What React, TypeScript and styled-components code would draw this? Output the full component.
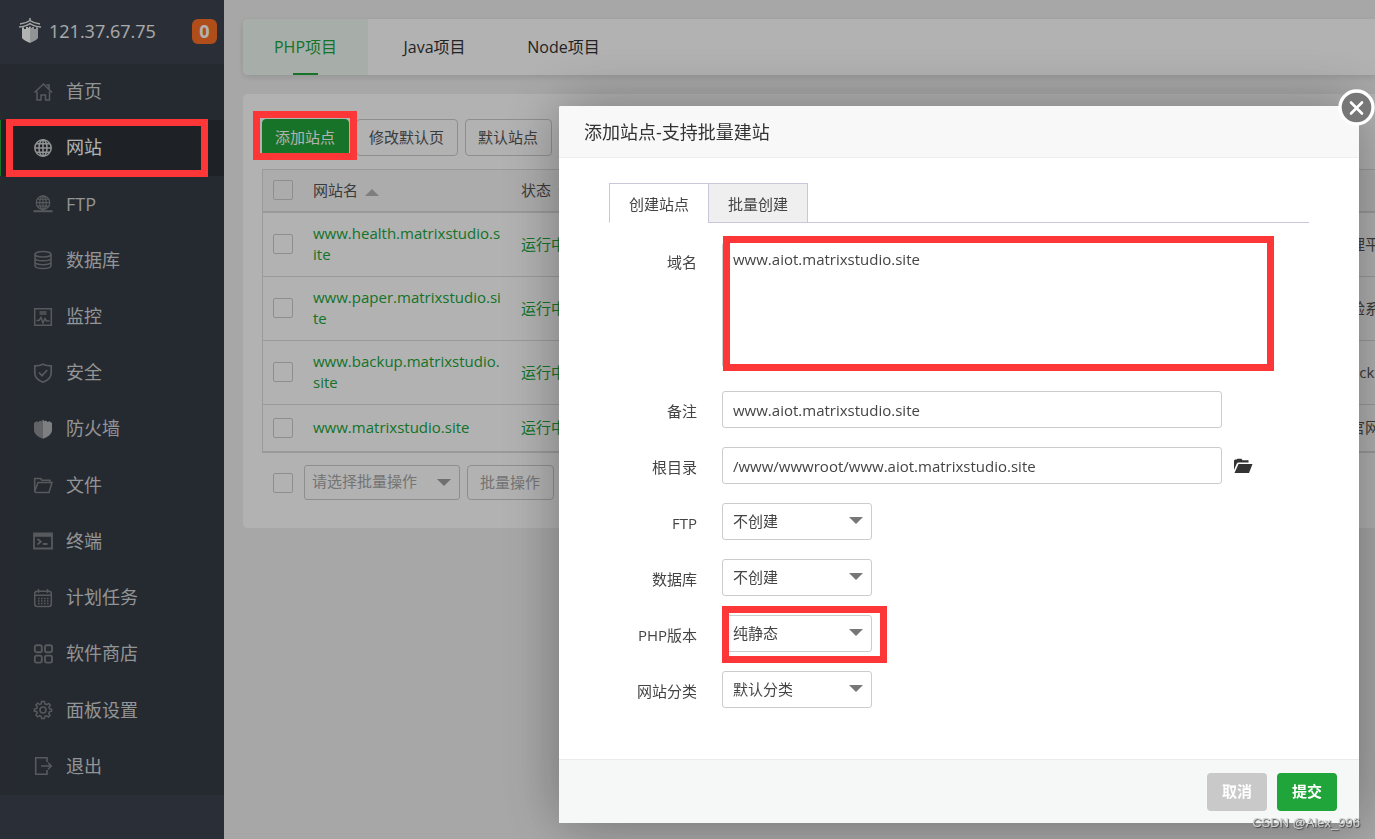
import React from "react";
import styled, { createGlobalStyle, css } from "styled-components";

const GlobalStyle = createGlobalStyle`
  *, *::before, *::after { box-sizing: border-box; }
  html, body { margin: 0; height: 100%; }
  body {
    background: #f0f0f0;
    color: #555;
    font: 15px/21px "Open Sans", "Noto Sans CJK SC", sans-serif;
    overflow: hidden;
  }
  button, input, select, textarea { font: inherit; color: inherit; margin: 0; }
  a { text-decoration: none; }
`;

const green = "#20a53a";

/* ---------- page shell ---------- */

const Shell = styled.div`
  display: flex;
  min-height: 100vh;
`;

const Sidebar = styled.aside`
  flex: 0 0 224px;
  background: #3d444f;
`;

const ServerBar = styled.div`
  display: flex;
  align-items: center;
  height: 64px;
  padding: 0 7px 2px 19px;
  color: #f2f4f5;
  font-size: 18px;
  svg { margin-right: 8px; }
`;

const MessageBadge = styled.span`
  margin-left: auto;
  width: 25px;
  height: 25px;
  border-radius: 6px;
  background: #fc7028;
  color: #fff;
  font-weight: 700;
  line-height: 25px;
  text-align: center;
`;

const Nav = styled.nav`
  display: grid;
  grid-auto-rows: 1fr;
  min-height: 731px;
  background: #363c45;
`;

const NavLink = styled.a<{ $active?: boolean }>`
  display: flex;
  align-items: center;
  gap: 13px;
  padding: 0 0 1px 32px;
  border-left: 1px solid ${(p) => (p.$active ? green : "#3a3d42")};
  background: ${(p) => (p.$active ? "#2b3036" : "transparent")};
  color: ${(p) => (p.$active ? "#fff" : "#d2d4d6")};
  font-size: 18px;
  svg { color: ${(p) => (p.$active ? "#cfd1d3" : "#7d8185")}; }
`;

const Main = styled.main`
  flex: 1;
  min-width: 0;
  padding: 19px 0 0 19px;
`;

const ProjectTabs = styled.div`
  display: flex;
  gap: 4px;
  height: 56px;
  margin-bottom: 19px;
  background: #fff;
  border-radius: 5px 0 0 5px;
  box-shadow: 0 2px 6px rgba(0, 0, 0, 0.12);
  overflow: hidden;
`;

const ProjectTab = styled.button<{ $active?: boolean }>`
  position: relative;
  min-width: 125px;
  padding: 0 12px;
  border: 0;
  background: ${(p) => (p.$active ? "#f0faf3" : "transparent")};
  color: ${(p) => (p.$active ? green : "#333")};
  font-size: 16px;
  ${(p) =>
    p.$active &&
    css`
      &::after {
        content: "";
        position: absolute;
        left: 50px;
        right: 50px;
        bottom: 0;
        height: 2px;
        background: ${green};
      }
    `}
`;

const Panel = styled.section`
  padding: 25px 0 28px 19px;
  background: #fff;
  border-radius: 5px 0 0 5px;
`;

const Toolbar = styled.div`
  display: flex;
  gap: 7px;
  margin-bottom: 13px;
`;

const ToolButton = styled.button<{ $primary?: boolean; $muted?: boolean }>`
  height: ${(p) => (p.$muted ? "35px" : "37px")};
  padding: 0 13px 0 12px;
  border: 1px solid ${(p) => (p.$primary ? green : "#ccc")};
  border-radius: 4px;
  background: ${(p) => (p.$primary ? green : "#fff")};
  color: ${(p) => (p.$primary ? "#fff" : p.$muted ? "#a6a6a6" : "#555")};
  white-space: nowrap;
`;

/* ---------- site table ---------- */

const Table = styled.table`
  width: 100%;
  table-layout: fixed;
  border-collapse: separate;
  border-spacing: 0;
  border: solid #ddd;
  border-width: 1px 0 1px 1px;
`;

const Head = styled.th`
  height: 43px;
  padding: 0 10px 1px;
  border-bottom: 2px solid #ddd;
  background: #f7f7f7;
  font-weight: 400;
  text-align: left;
  white-space: nowrap;
  overflow: hidden;
  svg { margin-left: 7px; color: #b5b5b5; }
`;

const Cell = styled.td<{ $nowrap?: boolean }>`
  height: 47px;
  padding: 10px 10px 11px;
  border-bottom: 1px solid #ddd;
  word-break: break-all;
  overflow: hidden;
  white-space: ${(p) => (p.$nowrap ? "nowrap" : "normal")};
`;

const GreenLink = styled.a`
  color: ${green};
`;

const Check = styled.input`
  display: block;
  appearance: none;
  flex: none;
  width: 20px;
  height: 20px;
  border: 1px solid #ccc;
  border-radius: 2px;
  background: transparent;
`;

const BatchRow = styled.div`
  display: flex;
  align-items: center;
  padding: 12px 0 0 11px;
  gap: 7px;
  ${Check} { margin-right: 4px; }
`;

/* ---------- select ---------- */

const SelectBox = styled.span<{ $width: number; $muted?: boolean }>`
  position: relative;
  display: block;
  width: ${(p) => p.$width}px;
  height: ${(p) => (p.$muted ? 35 : 37)}px;
  color: ${(p) => (p.$muted ? "#a6a6a6" : "#444")};
  select {
    appearance: none;
    width: 100%;
    height: 100%;
    padding: 0 30px ${(p) => (p.$muted ? "2px 7px" : "0 10px")};
    border: 1px solid #ccc;
    border-radius: 3px;
    background: #fff;
  }
  svg {
    position: absolute;
    top: 14px;
    right: 9px;
    color: ${(p) => (p.$muted ? "#a0a0a0" : "#777")};
    pointer-events: none;
  }
`;

/* ---------- dialog ---------- */

const Mask = styled.div`
  position: fixed;
  inset: 0;
  background: rgba(0, 0, 0, 0.3);
`;

const Dialog = styled.section`
  position: fixed;
  top: 106px;
  right: 16px;
  width: 800px;
  background: #fff;
  border-radius: 2px;
  box-shadow: 1px 1px 60px rgba(0, 0, 0, 0.35);
  color: #444;
`;

const DialogTitle = styled.h2`
  margin: 0;
  padding: 0 25px;
  height: 52px;
  border-bottom: 1px solid #eee;
  border-radius: 2px 2px 0 0;
  background: #f8f8f8;
  color: #333;
  font-size: 18px;
  font-weight: 400;
  line-height: 52px;
`;

const CloseButton = styled.button`
  position: absolute;
  top: -17px;
  right: -16px;
  display: flex;
  padding: 0;
  border: 0;
  background: none;
`;

const DialogBody = styled.div`
  padding: 25px 50px 51px;
`;

const FormTabs = styled.div`
  display: flex;
  height: 40px;
  margin-bottom: 19px;
  border-bottom: 1px solid #c9c8da;
`;

const FormTab = styled.button<{ $active?: boolean }>`
  height: 40px;
  padding: 2px 19px 0;
  border: 1px solid #c9c8da;
  background: #efefef;
  ${(p) =>
    p.$active &&
    css`
      border-right: 0;
      border-bottom-color: #fff;
      background: #fff;
    `}
`;

const Form = styled.form`
  display: grid;
  gap: 19px;
`;

const Row = styled.div`
  display: flex;
  align-items: flex-start;
`;

const Label = styled.label`
  flex: 0 0 88px;
  height: 37px;
  margin-right: 25px;
  line-height: 40px;
  text-align: right;
`;

const TextInput = styled.input`
  width: 500px;
  height: 37px;
  padding: 0 10px;
  border: 1px solid #ccc;
  border-radius: 3px;
  background: #fff;
`;

const DomainArea = styled.textarea`
  display: block;
  width: 550px;
  height: 126px;
  margin-bottom: 4px;
  padding: 6px 10px;
  border: 1px solid #ccc;
  border-radius: 3px;
  resize: none;
  background: #fff;
`;

const FolderButton = styled.button`
  display: flex;
  align-self: center;
  margin-left: 11px;
  padding: 0;
  border: 0;
  background: none;
  color: #333;
`;

const DialogFooter = styled.footer`
  display: flex;
  justify-content: flex-end;
  gap: 10px;
  padding: 13px 22px 12px;
  border-top: 1px solid #e8eced;
  background: #f6f8f8;
`;

const FooterButton = styled.button<{ $primary?: boolean }>`
  width: 60px;
  height: 38px;
  padding: 0 0 2px;
  border: 0;
  border-radius: 4px;
  background: ${(p) => (p.$primary ? green : "#c9c9c9")};
  color: #fff;
  font-weight: 700;
`;

/* red marker frames drawn over the interface */
const Marker = styled.div<{ $x: number; $y: number; $w: number; $h: number }>`
  position: absolute;
  left: ${(p) => p.$x}px;
  top: ${(p) => p.$y}px;
  width: ${(p) => p.$w}px;
  height: ${(p) => p.$h}px;
  border: 7px solid #fd3737;
  pointer-events: none;
`;

const Watermark = styled.div`
  position: fixed;
  right: 15px;
  bottom: 8px;
  color: #d2d2d2;
  font: 13px/16px "Liberation Sans", sans-serif;
  text-shadow: 1px 1px 1px #444;
`;

/* ---------- icons ---------- */

const Triangle = ({ up, size = 14 }: { up?: boolean; size?: number }) => (
  <svg width={size} height={size / 2} viewBox="0 0 14 7" fill="currentColor">
    <path d={up ? "M0 7L7 0L14 7Z" : "M0 0H14L7 7Z"} />
  </svg>
);

const globe = (
  <>
    <circle cx="10" cy="10" r="8.2" />
    <ellipse cx="10" cy="10" rx="4" ry="8.2" />
    <path d="M10 1.8V18.2M1.8 10H18.2M3 5.8H17M3 14.2H17" />
  </>
);

const icons: Record<string, React.ReactNode> = {
  home: <path d="M1.5 10.5L10.5 2L19 10.5M4 9.5V18H8V13H12.5V18H16.5V9.5M13.5 3H16V7" />,
  globe,
  ftp: (
    <>
      <g transform="translate(1.8 .5) scale(.82)">{globe}</g>
      <path d="M10 15V17M.5 17.2H19.5" strokeWidth="2" />
    </>
  ),
  database: (
    <>
      <ellipse cx="10" cy="4.2" rx="8" ry="2.8" />
      <path d="M2 4.2V15.5C2 19.6 18 19.6 18 15.5V4.2M2 8C2 11.8 18 11.8 18 8M2 11.8C2 15.6 18 15.6 18 11.8" />
    </>
  ),
  monitor: (
    <>
      <path d="M1.7 1.7H18.3V18.3H1.7Z" />
      <path d="M6.5 5H13.5M6.5 7H13.5M3.5 13.5H6L8 10.5L10 16L12 11.5L13.5 14H16.5" />
    </>
  ),
  shield: <path d="M10 1.2C7.5 2.5 5 2.8 1.8 2.8V10C1.8 14.5 5.5 17.5 10 19.2C14.5 17.5 18.2 14.5 18.2 10V2.8C15 2.8 12.5 2.5 10 1.2ZM6 9.5L9 12.7L14.2 7" strokeWidth="1.7" />,
  wall: (
    <g stroke="none">
      <path d="M10 .5L8.5 2.3L7 1.5L5.5 3L3.5 2.3L1 4V11C1 15 5 18 10 19.8Z" fill="#8b8e92" />
      <path d="M10 .5L11.5 2.3L13 1.5L14.5 3L16.5 2.3L19 4V11C19 15 15 18 10 19.8Z" fill="#b4b6b8" />
    </g>
  ),
  folder: <path d="M1.7 16.5V3.5H7.5L9 5.3H17V7.5M1.7 16.5L5 7.5H19L16 17.5H3Q1.7 17.5 1.7 16.5Z" />,
  terminal: (
    <>
      <path d="M1 2.5H19V17.5H1Z" strokeWidth="1.8" />
      <path d="M1 4H19" strokeWidth="3.6" />
      <path d="M4.5 8L7.8 10.8L4.5 13.5M9.8 13H14.5" strokeWidth="1.8" />
    </>
  ),
  calendar: (
    <>
      <rect x="1.7" y="3.2" width="16.6" height="15.2" rx="2.5" />
      <path d="M2 7.3H18M5.5 1V5M14.5 1V5" />
      <path d="M5 10.5H15.5M5 13H15.5M5 15.5H15.5" strokeDasharray="1.6 1.4" />
    </>
  ),
  grid: (
    <g strokeWidth="1.9">
      <rect x="1.8" y="1.2" width="7" height="7" rx="1.8" />
      <rect x="12" y="1.2" width="7" height="7" rx="1.8" />
      <rect x="1.8" y="11.6" width="7" height="7" rx="1.8" />
      <rect x="12" y="11.6" width="7" height="7" rx="1.8" />
    </g>
  ),
  gear: (
    <>
      <circle cx="10" cy="10" r="3" />
      <path d="M8.6 1.5H11.4L12 4L13.6 4.7L15.8 3.4L17.3 5L16 7.2L16.5 8.6L18.6 9.2V11.2L16.4 11.8L15.8 13.4L17 15.4L15.4 17L13.2 15.8L11.9 16.3L11.3 18.5H8.7L8.1 16.3L6.6 15.7L4.6 16.9L3 15.2L4.2 13.2L3.7 11.7L1.4 11.1V9L3.7 8.4L4.3 6.8L3 4.8L4.8 3.2L6.7 4.5L8.1 4Z" />
    </>
  ),
  exit: <path d="M14 6V1.8H2.7V18.2H14V14M8 10H18.5M15 6.8L18.3 10L15 13.2" strokeWidth="1.6" />,
};

const NavIcon = ({ name }: { name: string }) => (
  <svg width="20" height="20" viewBox="0 0 20 20" fill="none" stroke="currentColor" strokeWidth="1.5">
    {icons[name]}
  </svg>
);

const Logo = () => (
  <svg width="22" height="26" viewBox="0 0 22 26">
    <path d="M11 0V3M1 6Q7 5.5 11 2.5Q15 5.5 21 6M0 9Q7 8.5 11 5.5Q15 8.5 22 9" fill="none" stroke="#eee" strokeWidth="1.5" />
    <path d="M3 9.5L5 9.2V11H7V9H9V10.5L11 8V25Q4 22 3 20Z" fill="#fff" />
    <path d="M19 9.5L17 9.2V11H15V9H13V10.5L11 8V25Q18 22 19 20Z" fill="#d2d3d4" />
  </svg>
);

/* ---------- data ---------- */

const navItems = [
  ["home", "首页"],
  ["globe", "网站"],
  ["ftp", "FTP"],
  ["database", "数据库"],
  ["monitor", "监控"],
  ["shield", "安全"],
  ["wall", "防火墙"],
  ["folder", "文件"],
  ["terminal", "终端"],
  ["calendar", "计划任务"],
  ["grid", "软件商店"],
  ["gear", "面板设置"],
  ["exit", "退出"],
];

const sites = [
  ["www.health.matrixstudio.site", "健康管理平台"],
  ["www.paper.matrixstudio.site", "论文检验系统"],
  ["www.backup.matrixstudio.site", "Data backup"],
  ["www.matrixstudio.site", "Matrix官网"],
];

const selects = [
  ["ftp", "FTP", "不创建"],
  ["database", "数据库", "不创建"],
  ["php", "PHP版本", "纯静态"],
  ["category", "网站分类", "默认分类"],
];

export default function App() {
  return (
    <>
      <GlobalStyle />
      <Shell>
        <Sidebar>
          <ServerBar>
            <Logo />
            121.37.67.75
            <MessageBadge>0</MessageBadge>
          </ServerBar>
          <Nav>
            {navItems.map(([icon, text]) => (
              <NavLink key={icon} href="#" $active={icon === "globe"}>
                <NavIcon name={icon} />
                {text}
              </NavLink>
            ))}
          </Nav>
        </Sidebar>

        <Main>
          <ProjectTabs>
            <ProjectTab $active>PHP项目</ProjectTab>
            <ProjectTab>Java项目</ProjectTab>
            <ProjectTab>Node项目</ProjectTab>
          </ProjectTabs>

          <Panel>
            <Toolbar>
              <ToolButton $primary>添加站点</ToolButton>
              <ToolButton>修改默认页</ToolButton>
              <ToolButton>默认站点</ToolButton>
            </Toolbar>

            <Table>
              <colgroup>
                <col style={{ width: 40 }} />
                <col style={{ width: 208 }} />
                <col style={{ width: 100 }} />
                <col />
                <col style={{ width: 80 }} />
              </colgroup>
              <thead>
                <tr>
                  <Head><Check type="checkbox" aria-label="all" /></Head>
                  <Head>网站名<Triangle up /></Head>
                  <Head>状态<Triangle /></Head>
                  <Head />
                  <Head />
                </tr>
              </thead>
              <tbody>
                {sites.map(([domain, note]) => (
                  <tr key={domain}>
                    <Cell><Check type="checkbox" aria-label={domain} /></Cell>
                    <Cell><GreenLink href="#">{domain}</GreenLink></Cell>
                    <Cell><GreenLink href="#">运行中</GreenLink></Cell>
                    <Cell />
                    <Cell $nowrap>{note}</Cell>
                  </tr>
                ))}
              </tbody>
            </Table>

            <BatchRow>
              <Check type="checkbox" aria-label="batch" />
              <SelectBox $width={156} $muted>
                <select aria-label="batch action">
                  <option>请选择批量操作</option>
                </select>
                <Triangle />
              </SelectBox>
              <ToolButton $muted>批量操作</ToolButton>
            </BatchRow>
          </Panel>
        </Main>
      </Shell>

      <Mask />

      <Dialog role="dialog" aria-labelledby="dialog-title">
        <DialogTitle id="dialog-title">添加站点-支持批量建站</DialogTitle>
        <DialogBody>
          <FormTabs>
            <FormTab $active>创建站点</FormTab>
            <FormTab>批量创建</FormTab>
          </FormTabs>
          <Form>
            <Row>
              <Label htmlFor="domain">域名</Label>
              <DomainArea id="domain" spellCheck={false} defaultValue="www.aiot.matrixstudio.site" />
            </Row>
            <Row>
              <Label htmlFor="note">备注</Label>
              <TextInput id="note" defaultValue="www.aiot.matrixstudio.site" />
            </Row>
            <Row>
              <Label htmlFor="root">根目录</Label>
              <TextInput id="root" defaultValue="/www/wwwroot/www.aiot.matrixstudio.site" />
              <FolderButton type="button" aria-label="folder">
                <svg width="20" height="16" viewBox="0 0 20 16" fill="currentColor">
                  <path d="M1 12V2.5L2 1.5H3.5L4.5 .8H8.5L9.5 2.2H15.5V4.5H5L3.8 5.5Z" />
                  <path d="M5.5 6H19.5L16 15H1.5Z" />
                </svg>
              </FolderButton>
            </Row>
            {selects.map(([id, label, value]) => (
              <Row key={id}>
                <Label htmlFor={id}>{label}</Label>
                <SelectBox $width={150}>
                  <select id={id}>
                    <option>{value}</option>
                  </select>
                  <Triangle />
                </SelectBox>
              </Row>
            ))}
          </Form>
        </DialogBody>
        <DialogFooter>
          <FooterButton>取消</FooterButton>
          <FooterButton $primary>提交</FooterButton>
        </DialogFooter>
        <Marker $x={164} $y={130} $w={551} $h={135} />
        <Marker $x={163} $y={500} $w={165} $h={57} />
        <CloseButton aria-label="close">
          <svg width="37" height="37" viewBox="0 0 37 37">
            <circle cx="18.5" cy="18.5" r="16.5" fill="#777" stroke="#fff" strokeWidth="3.4" />
            <path d="M13 13.5L24 24.5M24 13.5L13 24.5" stroke="#fff" strokeWidth="2.6" strokeLinecap="round" />
          </svg>
        </CloseButton>
      </Dialog>

      <Marker $x={6} $y={119} $w={202} $h={58} />
      <Marker $x={253} $y={111} $w={104} $h={49} />
      <Watermark>CSDN @Alex_996</Watermark>
    </>
  );
}
